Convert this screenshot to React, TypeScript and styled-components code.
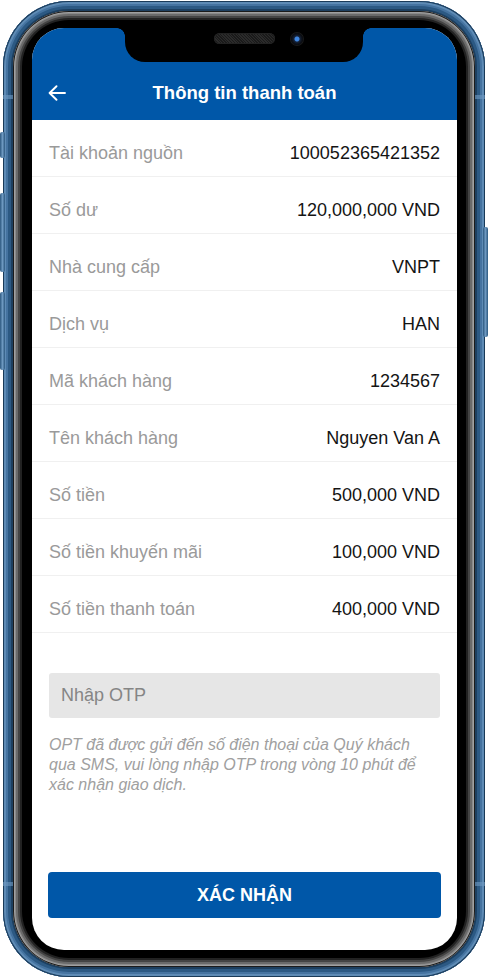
import React from "react";
import styled, { createGlobalStyle } from "styled-components";

const GlobalStyle = createGlobalStyle`
  html, body { margin: 0; padding: 0; background: #ffffff; }
  body { font-family: "Liberation Sans", Arial, sans-serif; }
  * { box-sizing: border-box; }
`;

const Page = styled.div`
  width: 489px;
  height: 980px;
  padding: 1px 0 0 3px;
`;

const Phone = styled.div`
  position: relative;
  width: 482px;
  height: 976px;
  border-radius: 66px;
  padding: 10px;
  background: #2d5b86;
  box-shadow: inset 0 0 0 1px #1a3a58, inset 0 0 0 3px #5e8bb5, inset 0 0 0 5px #4573a0,
    inset 0 0 0 8px #2c5983, inset 0 0 0 10px #1d3f5f;
`;

const SideButton = styled.div<{ $top: number; $height: number; $right?: boolean }>`
  position: absolute;
  top: ${(p) => p.$top}px;
  height: ${(p) => p.$height}px;
  width: 5px;
  ${(p) => (p.$right ? "right: -3px;" : "left: -3px;")}
  border-radius: 2px;
  background: linear-gradient(90deg, #2c587f, #6d98c0 50%, #2c587f);
`;

const Antenna = styled.div<{ $top: number; $right?: boolean }>`
  position: absolute;
  top: ${(p) => p.$top}px;
  ${(p) => (p.$right ? "right: 0;" : "left: 0;")}
  width: 10px;
  height: 4px;
  background: #6f9ac2;
  opacity: 0.6;
`;

const Bezel = styled.div`
  width: 100%;
  height: 100%;
  border-radius: 56px;
  padding: 17px 18px 17px 19px;
  background: #000;
  box-shadow: inset 0 0 0 1px #1b1b1b, inset 0 0 0 2px #a0a0a0, inset 0 0 0 3px #8a8a8a,
    inset 0 0 0 5px #6a6a6a, inset 0 0 0 7px #444, inset 0 0 0 9px #222;
`;

const Screen = styled.div`
  position: relative;
  width: 100%;
  height: 100%;
  border-radius: 32px;
  overflow: hidden;
  background: #ffffff;
  display: flex;
  flex-direction: column;
`;

const Notch = styled.div`
  position: absolute;
  top: 0;
  left: 93px;
  width: 238px;
  height: 34px;
  background: #000;
  border-radius: 0 0 20px 20px;
  display: flex;
  align-items: flex-start;
  gap: 16px;
  padding: 5px 0 0 89px;
  z-index: 2;

  &::before,
  &::after {
    content: "";
    position: absolute;
    top: 0;
    width: 8px;
    height: 8px;
  }
  &::before {
    left: -8px;
    background: radial-gradient(circle at 0 100%, transparent 7.5px, #000 8px);
  }
  &::after {
    right: -8px;
    background: radial-gradient(circle at 100% 100%, transparent 7.5px, #000 8px);
  }
`;

const Speaker = styled.div`
  width: 61px;
  height: 11px;
  border-radius: 6px;
  background: repeating-linear-gradient(45deg, #2b2b2b 0 1px, #1a1a1a 1px 2px);
  box-shadow: inset 0 0 0 1px #222;
`;

const Camera = styled.div`
  width: 12px;
  height: 12px;
  border-radius: 50%;
  background: radial-gradient(circle, #3f86e0 0 2px, #15233a 3px, #0c0f16 5px);
  box-shadow: 0 0 0 1px #1a1a1a;
`;

const Header = styled.header`
  height: 92px;
  flex-shrink: 0;
  background: #0057a8;
  padding: 48px 16px 10px;
  display: grid;
  grid-template-columns: 18px 1fr 18px;
  align-items: center;
`;

const BackButton = styled.button`
  width: 18px;
  height: 34px;
  padding: 0;
  border: none;
  background: transparent;
  display: flex;
  align-items: center;
  cursor: pointer;
`;

const Title = styled.h1`
  margin: 0;
  text-align: center;
  color: #ffffff;
  font-size: 18.5px;
  font-weight: 700;
  line-height: 34px;
`;

const InfoList = styled.div`
  display: flex;
  flex-direction: column;
`;

const InfoRow = styled.div`
  display: flex;
  justify-content: space-between;
  align-items: center;
  padding: 23px 17px 13px;
  border-bottom: 1px solid #f0f0f0;
  font-size: 18px;
  line-height: 20px;
`;

const Label = styled.span`
  color: #9a9a9a;
`;

const Value = styled.span`
  color: #141414;
`;

const Body = styled.div`
  flex: 1;
  display: flex;
  flex-direction: column;
  padding: 40px 17px 32px;
`;

const OtpInput = styled.input`
  width: 100%;
  height: 45px;
  border: none;
  border-radius: 3px;
  background: #e6e6e6;
  padding: 0 12px;
  font-family: "Liberation Sans", Arial, sans-serif;
  font-size: 18px;
  color: #333;
  outline: none;

  &::placeholder {
    color: #858585;
  }
`;

const Hint = styled.p`
  margin: 17px 0 0;
  max-width: 380px;
  font-size: 16px;
  line-height: 20px;
  font-style: italic;
  color: #a0a0a0;
`;

const ConfirmButton = styled.button`
  margin-top: auto;
  width: 393px;
  margin-left: -1px;
  height: 46px;
  border: none;
  border-radius: 4px;
  background: #0057a8;
  color: #ffffff;
  font-family: "Liberation Sans", Arial, sans-serif;
  font-size: 18px;
  font-weight: 700;
  cursor: pointer;
`;

const rows: [string, string][] = [
  ["Tài khoản nguồn", "100052365421352"],
  ["Số dư", "120,000,000 VND"],
  ["Nhà cung cấp", "VNPT"],
  ["Dịch vụ", "HAN"],
  ["Mã khách hàng", "1234567"],
  ["Tên khách hàng", "Nguyen Van A"],
  ["Số tiền", "500,000 VND"],
  ["Số tiền khuyến mãi", "100,000 VND"],
  ["Số tiền thanh toán", "400,000 VND"],
];

export default function App() {
  return (
    <>
      <GlobalStyle />
      <Page>
        <Phone>
          <SideButton $top={131} $height={26} />
          <SideButton $top={192} $height={79} />
          <SideButton $top={291} $height={78} />
          <SideButton $right $top={226} $height={110} />
          <Antenna $top={94} />
          <Antenna $top={94} $right />
          <Antenna $top={881} />
          <Antenna $top={881} $right />
          <Bezel>
            <Screen>
              <Notch>
                <Speaker />
                <Camera />
              </Notch>
              <Header>
                <BackButton aria-label="Quay lại">
                  <svg width="18" height="16" viewBox="0 0 18 16" fill="none">
                    <path
                      d="M17 8H1.8M8.5 1.2L1.6 8l6.9 6.8"
                      stroke="#ffffff"
                      strokeWidth="1.9"
                      strokeLinecap="round"
                      strokeLinejoin="round"
                    />
                  </svg>
                </BackButton>
                <Title>Thông tin thanh toán</Title>
                <span />
              </Header>
              <InfoList>
                {rows.map(([label, value]) => (
                  <InfoRow key={label}>
                    <Label>{label}</Label>
                    <Value>{value}</Value>
                  </InfoRow>
                ))}
              </InfoList>
              <Body>
                <OtpInput placeholder="Nhập OTP" />
                <Hint>
                  OPT đã được gửi đến số điện thoại của Quý khách qua SMS, vui lòng nhập OTP trong
                  vòng 10 phút để xác nhận giao dịch.
                </Hint>
                <ConfirmButton>XÁC NHẬN</ConfirmButton>
              </Body>
            </Screen>
          </Bezel>
        </Phone>
      </Page>
    </>
  );
}
